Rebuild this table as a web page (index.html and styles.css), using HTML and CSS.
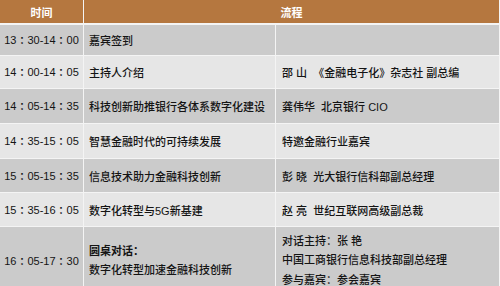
FILE: index.html
```html
<!DOCTYPE html>
<html lang="zh-CN">
<head>
<meta charset="utf-8">
<link rel="stylesheet" href="styles.css">
</head>
<body>
<div class="agenda">
  <div class="hd hd-time">时间</div>
  <div class="hd hd-flow">流程</div>

  <div class="c t dark">13<i class="colon">：</i>30-14<i class="colon">：</i>00</div>
  <div class="c s dark">嘉宾签到</div>
  <div class="c p dark"></div>

  <div class="c t light">14<i class="colon">：</i>00-14<i class="colon">：</i>05</div>
  <div class="c s light">主持人介绍</div>
  <div class="c p light">邵 山  《金融电子化》杂志社 副总编</div>

  <div class="c t dark">14<i class="colon">：</i>05-14<i class="colon">：</i>35</div>
  <div class="c s dark">科技创新助推银行各体系数字化建设</div>
  <div class="c p dark">龚伟华  北京银行 CIO</div>

  <div class="c t light">14<i class="colon">：</i>35-15<i class="colon">：</i>05</div>
  <div class="c s light">智慧金融时代的可持续发展</div>
  <div class="c p light">特邀金融行业嘉宾</div>

  <div class="c t dark">15<i class="colon">：</i>05-15<i class="colon">：</i>35</div>
  <div class="c s dark">信息技术助力金融科技创新</div>
  <div class="c p dark">彭 晓  光大银行信科部副总经理</div>

  <div class="c t light">15<i class="colon">：</i>35-16<i class="colon">：</i>05</div>
  <div class="c s light">数字化转型与5G新基建</div>
  <div class="c p light">赵 亮  世纪互联网高级副总裁</div>

  <div class="c t dark">16<i class="colon">：</i>05-17<i class="colon">：</i>30</div>
  <div class="c s dark multi"><b>圆桌对话<i class="colon">：</i></b><span>数字化转型加速金融科技创新</span></div>
  <div class="c p dark multi"><span>对话主持<i class="colon">：</i>张 艳</span><span>中国工商银行信息科技部副总经理</span><span>参与嘉宾<i class="colon">：</i>参会嘉宾</span></div>
</div>
</body>
</html>
```
FILE: styles.css
```css
html, body {
  margin: 0;
  padding: 0;
  background: #ffffff;
}
body {
  font-family: "Liberation Sans", "Noto Sans CJK SC", sans-serif;
  font-size: 11px;
  color: #141414;
}
.agenda {
  width: 500px;
  display: grid;
  grid-template-columns: 83px 191px 1fr;
  grid-template-rows: 24px 30px 32px 34px 34px 33px 33px 67px;
  column-gap: 1px;
  row-gap: 1px;
  padding-right: 1px;
  box-sizing: border-box;
  background: #f4f4f4;
}
.hd {
  background: #b5773f;
  color: #ffffff;
  font-weight: bold;
  margin-bottom: 1px;
  display: flex;
  align-items: center;
  justify-content: center;
}
.hd-flow {
  grid-column: 2 / 4;
}
.c {
  display: flex;
  align-items: center;
  white-space: pre;
  font-weight: 500;
}
.colon {
  font-style: normal;
  font-family: "Noto Sans CJK TC", sans-serif;
}
.dark { background: #cbcbcb; }
.light { background: #e6e6e6; }
.t {
  justify-content: center;
}
.s {
  padding-left: 5px;
}
.p {
  padding-left: 6px;
}
.multi {
  flex-direction: column;
  align-items: flex-start;
  justify-content: center;
  line-height: 19px;
}
.multi b, .multi span {
  display: block;
}
.multi b {
  font-weight: bold;
}
```
